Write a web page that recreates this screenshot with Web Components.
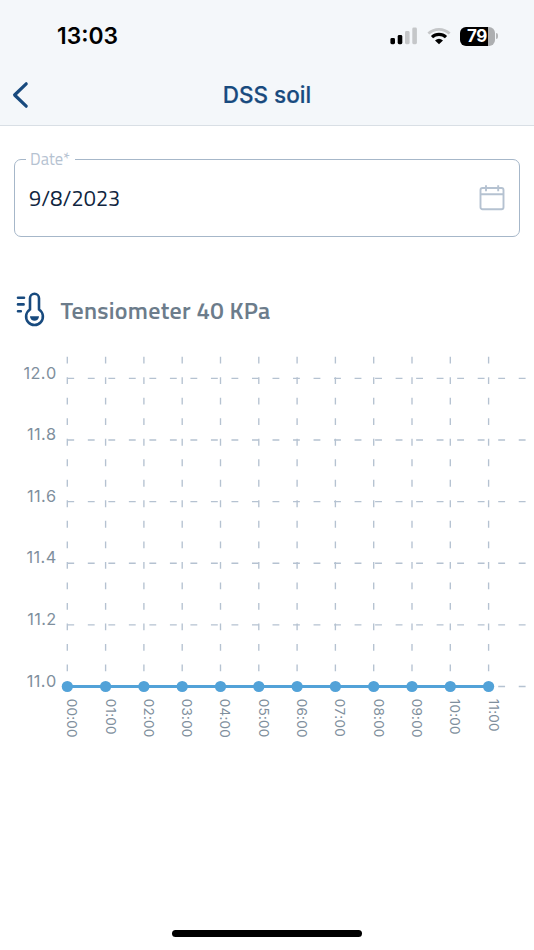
<!DOCTYPE html>
<html lang="en">
<head>
<meta charset="utf-8">
<meta name="viewport" content="width=device-width, initial-scale=1">
<title>DSS soil</title>
<style>
  body {
    margin: 0;
    background: #fff;
    font-family: Inter, "Liberation Sans", sans-serif;
  }
</style>
</head>
<body>
<soil-screen>
  <status-bar slot="header" time="13:03" battery="79"></status-bar>
  <nav-bar slot="header">DSS soil</nav-bar>
  <date-field label="Date*" value="9/8/2023"></date-field>
  <sensor-title>Tensiometer 40 KPa</sensor-title>
  <line-chart min="11" max="12" step="0.2" values="11,11,11,11,11,11,11,11,11,11,11,11"></line-chart>
</soil-screen>

<script>
class SoilScreen extends HTMLElement {
  constructor() {
    super();
    this.attachShadow({ mode: 'open' });
    this.shadowRoot.innerHTML = `
      <style>
        :host {
          display: flex;
          flex-direction: column;
          width: 534px;
          height: 950px;
          overflow: hidden;
          background: #fff;
        }

        header {
          box-sizing: border-box;
          height: 126px;
          background: #f4f7fa;
          border-bottom: 1px solid #d9dfe5;
        }

        main {
          flex: 1;
        }

        .home {
          width: 190px;
          height: 7px;
          margin: 0 auto 13px;
          border-radius: 4px;
          background: #000;
        }
      </style>
      <header><slot name="header"></slot></header>
      <main><slot></slot></main>
      <div class="home"></div>
    `;
  }
}

class StatusBar extends HTMLElement {
  constructor() {
    super();
    this.attachShadow({ mode: 'open' });
    const time = this.getAttribute('time');
    const battery = this.getAttribute('battery');

    this.shadowRoot.innerHTML = `
      <style>
        :host {
          display: flex;
          justify-content: space-between;
          align-items: center;
          height: 72px;
          padding: 0 36px 0 57px;
          color: #000;
        }

        .time {
          font-size: 22.8px;
          font-weight: 600;
          line-height: 28px;
        }

        .icons {
          display: flex;
          align-items: center;
        }

        svg {
          display: block;
        }

        .wifi {
          margin: 0 9px 0 10px;
        }

        .battery {
          display: flex;
          align-items: center;
          justify-content: center;
          width: 35px;
          height: 19px;
          border-radius: 6px;
          background: linear-gradient(to right, #000 79%, #adafb1 79%);
          color: #fff;
          font-size: 17px;
          font-weight: 700;
          letter-spacing: -0.5px;
          text-indent: -1px;
        }

        .cap {
          width: 2px;
          height: 6px;
          margin-left: 1px;
          border-radius: 0 2px 2px 0;
          background: #b4b6b8;
        }
      </style>
      <span class="time">${time}</span>
      <div class="icons">
        <svg width="27" height="18" viewBox="0 0 27 18">
          <rect x="0.4" y="11" width="4.6" height="6.2" rx="1.4"/>
          <rect x="7.7" y="8" width="4.6" height="9.2" rx="1.4"/>
          <rect x="15" y="4" width="4.6" height="13.2" rx="1.4" fill="#c5c7c9"/>
          <rect x="22.3" y="0.6" width="4.6" height="16.6" rx="1.4" fill="#c5c7c9"/>
        </svg>
        <svg class="wifi" width="24" height="18" viewBox="0 0 24 18" fill="none">
          <path d="M1.4 6.5C7.4 .9 16.6 .9 22.6 6.5" stroke="#c5c7c9" stroke-width="2.8"/>
          <path d="M5 10.2C9 6.5 15 6.5 19 10.2" stroke="#000" stroke-width="3.2"/>
          <path d="M8 13.5Q12 10.2 16 13.5L12 17.2Z" fill="#000"/>
        </svg>
        <div class="battery">${battery}</div>
        <div class="cap"></div>
      </div>
    `;
  }
}

class NavBar extends HTMLElement {
  constructor() {
    super();
    this.attachShadow({ mode: 'open' });
    this.shadowRoot.innerHTML = `
      <style>
        :host {
          display: grid;
          grid-template-columns: 40px 1fr 40px;
          align-items: center;
          height: 45px;
          color: #184a7e;
        }

        svg {
          display: block;
          margin-left: 11px;
        }

        .title {
          text-align: center;
          font-size: 22.5px;
          font-weight: 500;
          line-height: 28px;
          -webkit-text-stroke: 0.2px #184a7e;
        }
      </style>
      <svg width="18" height="28" viewBox="0 0 18 28" fill="none" stroke="#184a7e" stroke-width="3.2" stroke-linecap="round" stroke-linejoin="round">
        <path d="M15.2 2.8L3.6 14L15.2 25.2"/>
      </svg>
      <span class="title"><slot></slot></span>
    `;
  }
}

class DateField extends HTMLElement {
  constructor() {
    super();
    this.attachShadow({ mode: 'open' });
    const label = this.getAttribute('label');
    const value = this.getAttribute('value');

    this.shadowRoot.innerHTML = `
      <style>
        :host {
          display: block;
          padding: 22px 14px 0;
          font-family: "Titillium Web", "Noto Sans", sans-serif;
        }

        fieldset {
          box-sizing: border-box;
          height: 89px;
          margin: 0;
          padding: 0 14px;
          border: 1px solid #a6b7c9;
          border-radius: 7px;
        }

        legend {
          box-sizing: border-box;
          width: 49px;
          margin-left: -3px;
          padding: 0 0 0 4px;
          color: #b5c2d1;
          font-size: 16.5px;
          line-height: 22px;
          white-space: nowrap;
        }

        .row {
          display: flex;
          align-items: center;
          justify-content: space-between;
          height: 55px;
        }

        .value {
          color: #0f2540;
          font-size: 21.6px;
          letter-spacing: 0.12px;
          line-height: 28px;
        }
      </style>
      <fieldset>
        <legend>${label}</legend>
        <div class="row">
          <span class="value">${value}</span>
          <svg width="26" height="27" viewBox="0 0 26 27" fill="none" stroke="#b5c2d1" stroke-width="1.9">
            <rect x="1.5" y="4" width="23" height="21.2" rx="2"/>
            <path d="M1.5 10.3H24.5M7 1.2V7.2M19.2 1.2V7.2"/>
          </svg>
        </div>
      </fieldset>
    `;
  }
}

class SensorTitle extends HTMLElement {
  constructor() {
    super();
    this.attachShadow({ mode: 'open' });
    this.shadowRoot.innerHTML = `
      <style>
        :host {
          display: flex;
          align-items: center;
          gap: 15px;
          padding: 55px 0 0 15.5px;
          height: 36px;
          color: #6c7c8b;
          font-family: "Titillium Web", "Noto Sans", sans-serif;
        }

        .name {
          font-size: 24px;
          font-weight: 600;
          letter-spacing: 0.26px;
          line-height: 32px;
          white-space: nowrap;
        }
      </style>
      <svg width="30" height="36" viewBox="0 0 30 36" fill="none" stroke="#184a7e" stroke-width="2.6" stroke-linecap="round">
        <path d="M2 5.7H8M2 12.4H7.6M2 19.3H4.8"/>
        <path d="M14 17.5V6.3a4.5 4.5 0 0 1 9 0V17.5a8.4 8.4 0 1 1-9 0Z" stroke-linejoin="round"/>
        <path d="M14 24.2H23a4.5 4.5 0 0 1-9 0Z" fill="#184a7e" stroke="none"/>
      </svg>
      <span class="name"><slot></slot></span>
    `;
  }
}

class LineChart extends HTMLElement {
  constructor() {
    super();
    this.attachShadow({ mode: 'open' });
    const min = Number(this.getAttribute('min'));
    const max = Number(this.getAttribute('max'));
    const step = Number(this.getAttribute('step'));
    const values = this.getAttribute('values').split(',').map(Number);

    const left = 67.3;
    const right = 526;
    const top = 33.4;
    const bottom = 341.5;
    const gap = 38.3;
    const yOf = v => bottom - (v - min) / (max - min) * (bottom - top);
    const xOf = i => left + i * gap;

    let grid = '';
    let labels = '';
    const rows = Math.round((max - min) / step);
    for (let i = 0; i <= rows; i++) {
      const v = min + i * step;
      const y = yOf(v);
      grid += `<line x1="${left}" y1="${y}" x2="${right}" y2="${y}"/>`;
      labels += `<text x="56.6" y="${y + 0.2}" text-anchor="end">${v.toFixed(1)}</text>`;
    }

    let dots = '';
    values.forEach((v, i) => {
      const x = xOf(i);
      const hour = String(i).padStart(2, '0') + ':00';
      grid += `<line x1="${x}" y1="11.7" x2="${x}" y2="${bottom}"/>`;
      labels += `<text class="hour" transform="translate(${x - 0.1} 353.8) rotate(90)">${hour}</text>`;
      dots += `<circle cx="${x}" cy="${yOf(v)}" r="5.6"/>`;
    });
    const points = values.map((v, i) => `${xOf(i)},${yOf(v)}`).join(' ');

    this.shadowRoot.innerHTML = `
      <style>
        :host {
          display: block;
          margin-top: 17px;
        }

        svg {
          display: block;
        }

        .grid {
          stroke: #b5c2d1;
          stroke-width: 1.35;
          stroke-dasharray: 6.85 13.67;
        }

        text {
          fill: #7f8f9d;
          font-size: 16.3px;
          font-kerning: none;
          letter-spacing: 0.4px;
        }

        .hour {
          font-size: 13.5px;
          letter-spacing: 0.2px;
        }

        .line {
          fill: none;
          stroke: #52a2d8;
          stroke-width: 2.8;
        }

        .dots {
          fill: #52a2d8;
        }
      </style>
      <svg width="534" height="405" viewBox="0 0 534 405">
        <g class="grid">${grid}</g>
        <g>${labels}</g>
        <polyline class="line" points="${points}"/>
        <g class="dots">${dots}</g>
      </svg>
    `;
  }
}

customElements.define('soil-screen', SoilScreen);
customElements.define('status-bar', StatusBar);
customElements.define('nav-bar', NavBar);
customElements.define('date-field', DateField);
customElements.define('sensor-title', SensorTitle);
customElements.define('line-chart', LineChart);
</script>
</body>
</html>
